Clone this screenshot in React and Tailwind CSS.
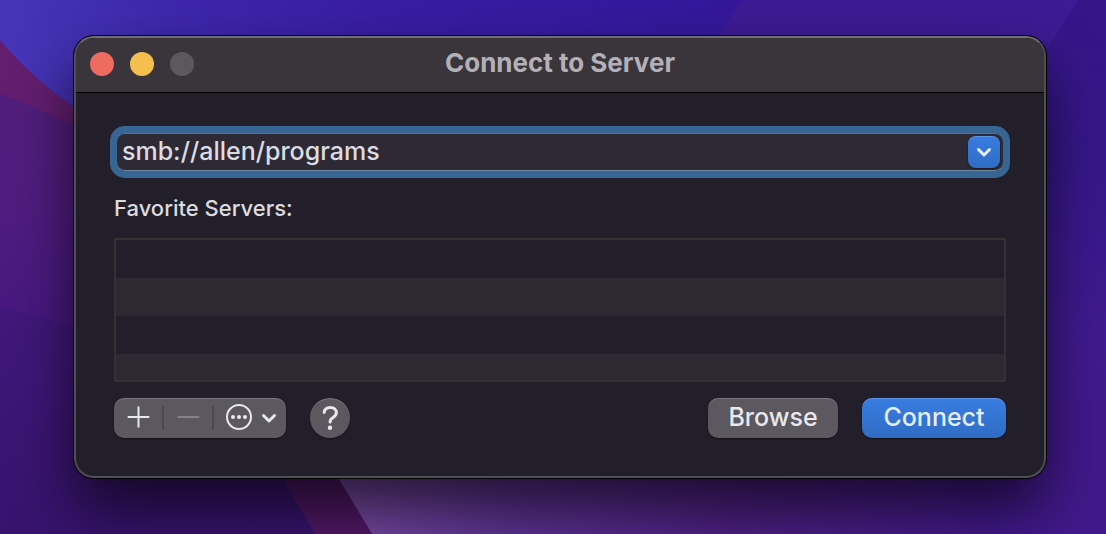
import React from "react";

function Wallpaper() {
  return (
    <svg
      className="absolute inset-0 -z-10 h-full w-full"
      viewBox="0 0 1106 534"
      preserveAspectRatio="none"
      aria-hidden="true"
    >
      <defs>
        <linearGradient id="base" x1="0" y1="0" x2="0" y2="1">
          <stop offset="0" stopColor="#3c1b94" />
          <stop offset="1" stopColor="#42198c" />
        </linearGradient>
        <linearGradient id="blue" x1="0" y1="0" x2="741" y2="0" gradientUnits="userSpaceOnUse">
          <stop offset="0" stopColor="#4636b7" />
          <stop offset="0.25" stopColor="#3d26ab" />
          <stop offset="0.55" stopColor="#381ca2" />
          <stop offset="1" stopColor="#34179a" />
        </linearGradient>
        <linearGradient id="right" x1="0" y1="0" x2="0" y2="320" gradientUnits="userSpaceOnUse">
          <stop offset="0" stopColor="#351689" />
          <stop offset="0.5" stopColor="#36178a" />
          <stop offset="1" stopColor="#36178a" stopOpacity="0" />
        </linearGradient>
        <linearGradient id="left" x1="0" y1="94" x2="0" y2="330" gradientUnits="userSpaceOnUse">
          <stop offset="0" stopColor="#501e7c" />
          <stop offset="0.5" stopColor="#501c80" />
          <stop offset="1" stopColor="#471881" />
        </linearGradient>
        <linearGradient id="lower" x1="0" y1="300" x2="0" y2="534" gradientUnits="userSpaceOnUse">
          <stop offset="0" stopColor="#42187c" />
          <stop offset="1" stopColor="#37136e" />
        </linearGradient>
        <linearGradient id="lavender" x1="340" y1="0" x2="1000" y2="0" gradientUnits="userSpaceOnUse">
          <stop offset="0" stopColor="#7c4ca6" />
          <stop offset="0.25" stopColor="#603496" />
          <stop offset="0.6" stopColor="#502086" />
          <stop offset="1" stopColor="#42198c" />
        </linearGradient>
      </defs>
      <rect width="1106" height="534" fill="url(#base)" />
      <path d="M1078 0H1106V320H1000V100L1050 45Z" fill="url(#right)" />
      <path d="M300 400H1106V534H372L338 478Z" fill="url(#lavender)" />
      <path d="M0 90L160 160V400H0Z" fill="url(#left)" />
      <path d="M0 306L160 352L283 478L315 534H0Z" fill="url(#lower)" />
      <path d="M240 405H300L338 478L372 534H315L283 478Z" fill="#521868" />
      <path d="M0 40L160 110V172Q60 115 0 94Z" fill="#631e70" />
      <path d="M0 0H741L700 66V140H130Q50 100 0 40Z" fill="url(#blue)" />
    </svg>
  );
}

function Chevron({ className }) {
  return (
    <svg className={className} viewBox="0 0 16 16" fill="none" aria-hidden="true">
      <path d="M2.5 5.5L8 11L13.5 5.5" stroke="currentColor" strokeWidth="3" strokeLinecap="round" strokeLinejoin="round" />
    </svg>
  );
}

const bezel = "shadow-[inset_0_1px_0_rgba(255,255,255,0.18),0_1px_2px_rgba(0,0,0,0.5)]";
const gray = "bg-[#5b5860] text-[#e9e8ea]";
const blue = "bg-linear-to-b from-[#397de2] to-[#2f6cc4] text-[#e4eefc]";

export default function App() {
  return (
    <main className="relative isolate min-h-screen overflow-hidden pt-9 pr-[60px] pb-14 pl-[74px] font-['Inter','Liberation_Sans',sans-serif]">
      <Wallpaper />
      <section
        aria-labelledby="title"
        className="overflow-hidden rounded-[20px] border-2 border-[#504e56] border-t-[#706e74] bg-[#231f2a] shadow-[0_0_0_1px_#000,0_32px_60px_rgba(0,0,0,0.66)]"
      >
        <header className="grid grid-cols-[1fr_auto_1fr] items-center border-b border-black bg-[#39353b] px-3.5 pt-[9px] pb-[13px]">
          <div className="flex gap-4 pt-0.5">
            <button aria-label="Close" className="size-6 rounded-full bg-[#ed6b60]" />
            <button aria-label="Minimize" className="size-6 rounded-full bg-[#f5bf4f]" />
            <button aria-label="Zoom" disabled className="size-6 rounded-full bg-[#5b585e]" />
          </div>
          <h1 id="title" className="text-[26px] leading-8 font-bold text-[#b3b0b7]">
            Connect to Server
          </h1>
        </header>

        <form className="px-[38px] pt-[37px] pb-[38px]" onSubmit={(e) => e.preventDefault()}>
          <div className="flex h-11 items-center rounded-[11px] border-3 border-[#386694] bg-[#2e2a35] pr-[3px] pl-[5px] shadow-[0_0_0_4px_#386694,inset_0_1px_0_#4378aa,inset_0_-1px_0_#6d87a3]">
            <input
              aria-label="Server Address"
              defaultValue="smb://allen/programs"
              className="min-w-0 flex-1 bg-transparent pb-0.5 text-[25px] leading-8 font-medium text-[#dddce0] outline-none"
            />
            <button
              type="button"
              aria-label="Recent servers"
              className={`flex size-8 items-center justify-center rounded-lg ${blue} ${bezel}`}
            >
              <Chevron className="size-4" />
            </button>
          </div>

          <h2 id="favorites" className="mt-5 text-[22px] leading-7 font-medium text-[#dcdbde]">
            Favorite Servers:
          </h2>
          <ul aria-labelledby="favorites" className="mt-4 border-2 border-[#343132]">
            <li className="h-[38px]" />
            <li className="h-[38px] bg-[#2d2a34]" />
            <li className="h-[38px]" />
            <li className="h-[26px] bg-[#2d2a34]" />
          </ul>

          <div className="mt-4 flex items-center">
            <div className={`flex h-10 items-center rounded-[10px] ${gray} ${bezel}`}>
              <button type="button" aria-label="Add" className="flex h-10 w-12 items-center justify-center">
                <svg className="size-6" viewBox="0 0 24 24" fill="none" aria-hidden="true">
                  <path d="M12.5 1.2V20.8M2.5 11H22.5" stroke="currentColor" strokeWidth="2" strokeLinecap="round" />
                </svg>
              </button>
              <span className="h-6 w-0.5 bg-[#4c4950]" />
              <button type="button" aria-label="Remove" disabled className="flex h-10 w-12 items-center justify-center text-[#858289]">
                <svg className="size-6" viewBox="0 0 24 24" fill="none" aria-hidden="true">
                  <path d="M2.5 11H22.5" stroke="currentColor" strokeWidth="2" strokeLinecap="round" />
                </svg>
              </button>
              <span className="h-6 w-0.5 bg-[#4c4950]" />
              <button type="button" aria-label="More" className="flex h-10 w-[72px] items-center gap-[9px] pl-3">
                <svg className="size-[26px] overflow-visible" viewBox="0 0 26 26" fill="none" aria-hidden="true">
                  <circle cx="13" cy="12" r="12" stroke="currentColor" strokeWidth="2" />
                  <g fill="currentColor">
                    <circle cx="7" cy="12" r="2" />
                    <circle cx="13" cy="12" r="2" />
                    <circle cx="19" cy="12" r="2" />
                  </g>
                </svg>
                <Chevron className="size-4" />
              </button>
            </div>
            <button
              type="button"
              aria-label="Help"
              className={`ml-6 flex size-10 items-center justify-center rounded-full ${gray} ${bezel}`}
            >
              <svg className="size-7" viewBox="0 0 28 28" fill="none" aria-hidden="true">
                <path
                  d="M8.2 8.4C8.4 5.2 11 3.4 14.3 3.4C17.8 3.4 20.4 5.4 20.4 8.5C20.4 10.8 19.1 12.1 17.1 13.4C15 14.7 14.1 15.6 14.1 18"
                  stroke="currentColor"
                  strokeWidth="3"
                  strokeLinecap="round"
                />
                <circle cx="14" cy="23.8" r="2.2" fill="currentColor" />
              </svg>
            </button>
            <button type="button" className={`ml-auto h-10 w-[130px] rounded-[10px] pb-0.5 text-[25px] leading-8 font-medium ${gray} ${bezel}`}>
              Browse
            </button>
            <button type="submit" className={`ml-6 h-10 w-36 rounded-[10px] pb-0.5 text-[25px] leading-8 font-medium ${blue} ${bezel}`}>
              Connect
            </button>
          </div>
        </form>
      </section>
    </main>
  );
}
